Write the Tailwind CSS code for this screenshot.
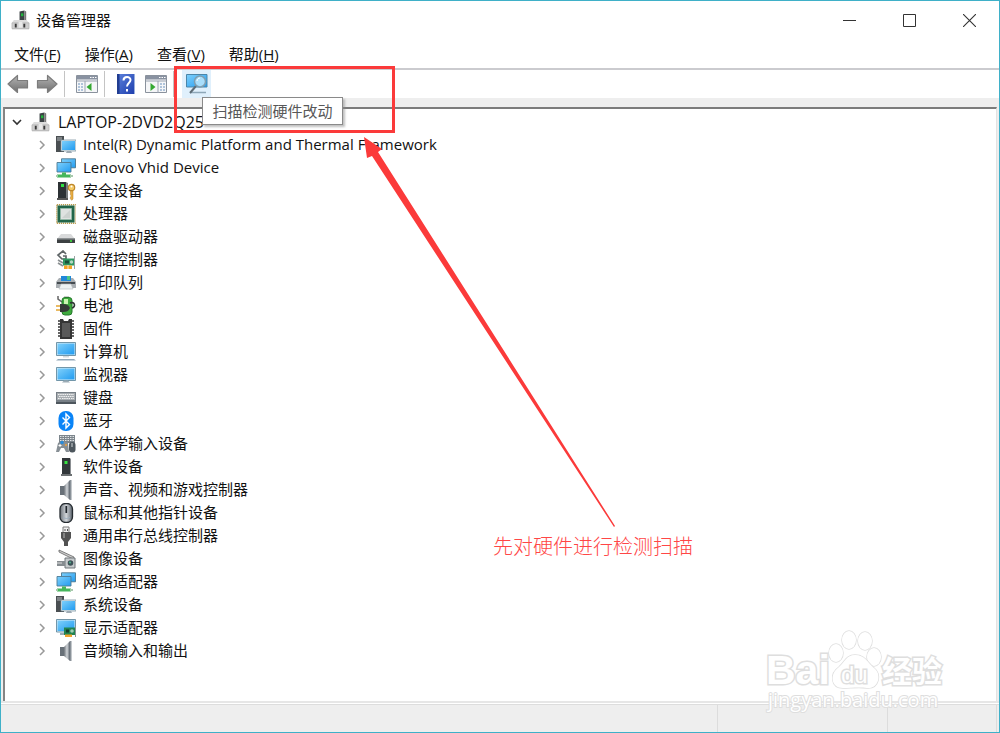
<!DOCTYPE html>
<html lang="zh-CN">
<head>
    <meta charset="UTF-8">
    <meta name="viewport" content="width=device-width, initial-scale=1.0">
    <title>设备管理器</title>
    <script src="https://cdn.jsdelivr.net/npm/@tailwindcss/browser@4"></script>
</head>
<body class="bg-white text-[#111] text-[15px] font-['Open_Sans','Noto_Sans_CJK_SC',sans-serif]">

    <!-- icon sprite -->
    <svg class="absolute w-0 h-0" aria-hidden="true">
        <defs>
            <linearGradient id="blue" x1="0" y1="0" x2="1" y2="1"><stop offset="0" stop-color="#7fd0fb"/><stop offset="1" stop-color="#219bf0"/></linearGradient>
            <linearGradient id="grey" x1="0" y1="0" x2="0" y2="1"><stop offset="0" stop-color="#b4b4b4"/><stop offset="1" stop-color="#6f6f6f"/></linearGradient>
            <linearGradient id="steel" x1="0" y1="0" x2="1" y2="0"><stop offset="0" stop-color="#6d737a"/><stop offset=".5" stop-color="#d2d6da"/><stop offset="1" stop-color="#59616a"/></linearGradient>
            <linearGradient id="help" x1="0" y1="0" x2="1" y2="1"><stop offset="0" stop-color="#5d82dc"/><stop offset="1" stop-color="#1f3fae"/></linearGradient>
        </defs>
        <symbol id="i-root" viewBox="0 0 20 20">
            <path d="M9 1l5-1v12H9z" fill="#3c4345"/><path d="M14 0l2 1v10l-2 1z" fill="#777"/><path d="M10.500 3h2.500v3h-2.500z" fill="#20b63c"/>
            <path d="M3 10h13l3 3v7H1v-7z" fill="#dcdcdc"/><path d="M1 13h18v6H1z" fill="#cfcfcf" stroke="#a8a8a8" stroke-width=".6"/>
            <path d="M4 14h2v4H4zM13 14h2v4h-2z" fill="#3a3a3a"/><path d="M8 12h4v6H8z" fill="#e9e9e9"/>
        </symbol>
        <symbol id="i-system" viewBox="0 0 20 20">
            <path d="M0 1h8v16H0z" fill="#4a4f52"/><path d="M1 3h5M1 5h5" stroke="#b3b8ba"/><path d="M5 7h2v2H5z" fill="#37e05b"/>
            <path d="M5 5h15v11H5z" fill="#e9f3f8" stroke="#6d8896" stroke-width=".7"/><path d="M6 6h13v9H6z" fill="url(#blue)"/>
            <path d="M11 16h4l1 2h-6z" fill="#9eabb4"/>
        </symbol>
        <symbol id="i-network" viewBox="0 0 20 20">
            <path d="M5.500 .8h14v9h-14z" fill="url(#blue)" stroke="#4b7890" stroke-width=".9"/>
            <path d="M1 4.500h14v9.500H1z" fill="url(#blue)" stroke="#4f7b93" stroke-width=".9"/>
            <path d="M6 14.500h4v2h5v3H1v-3h5z" fill="#45b65c"/><path d="M0 17h2v2H0zM14 17h3v2h-3z" fill="#a8c9ad"/>
        </symbol>
        <symbol id="i-security" viewBox="0 0 20 20">
            <path d="M2 1h8v16H2z" fill="#2d3235"/><path d="M10 1l2 1v15h-2z" fill="#777b7d"/><path d="M1 17h11v2H1z" fill="#555"/><path d="M5 3h3v3H5z" fill="#2ee042"/>
            <circle cx="15.500" cy="6.500" r="3.200" fill="#f4c965" stroke="#bd862a" stroke-width="1.200"/><path d="M14.500 10h2.500v8l-1.300 1.300-1.300-1.500V16l1-1-1-1.200z" fill="#e9ad41" stroke="#b07c23" stroke-width=".5"/><circle cx="15.500" cy="5.500" r="1" fill="#fff"/>
        </symbol>
        <symbol id="i-cpu" viewBox="0 0 20 20">
            <path d="M.8.8h18.400v18.400H.8z" fill="none" stroke="#b99b4e" stroke-width="1.400" stroke-dasharray="1.200 .8"/><path d="M1.500 1.500h17v17h-17z" fill="#22664a"/>
            <path d="M4.500 4.500h11v11h-11z" fill="#dfe2e0" stroke="#94b7a6"/><path d="M6 14L14 6v8z" fill="#cdd2cf"/>
        </symbol>
        <symbol id="i-disk" viewBox="0 0 20 20">
            <path d="M5 7h10l4 5H1z" fill="#d9dadb"/><path d="M1 11.500h18V16H1z" fill="#3c4042"/><path d="M1 11.500h18v1H1z" fill="#8f9496"/><circle cx="15" cy="14" r="1.100" fill="#3fe33e"/>
        </symbol>
        <symbol id="i-storage" viewBox="0 0 20 20">
            <path d="M10 4L7 1 2 5l4 4h4V6H7" fill="none" stroke="#5f6567" stroke-width="1.700"/><path d="M2 10l5 3M2 13l5 3" stroke="#8a8f91" stroke-width="1.700"/>
            <path d="M7 8.500h11v7H7z" fill="#2e9861"/><path d="M9 10.500h4v3H9z" fill="#194f38"/><circle cx="15.500" cy="12" r="1.700" fill="#b6d8c4"/><path d="M18.500 6v13" stroke="#9ba3a5"/><path d="M8 15.500h8V19H8z" fill="#f5a425"/><path d="M12 15v4" stroke="#fff" stroke-width=".7"/>
        </symbol>
        <symbol id="i-printer" viewBox="0 0 20 20">
            <path d="M5 3h10v5H5z" fill="#2088d9"/><path d="M11 3h3v4h-3z" fill="#4cc784"/><path d="M3 5h2v3h10V5h2l3 4v6H0V9z" fill="#a9aeb2"/>
            <path d="M1 9h18v2H1z" fill="#454b50"/><path d="M5 11h10l2 5H3z" fill="#edf1f2" stroke="#b3b9bc" stroke-width=".6"/>
        </symbol>
        <symbol id="i-battery" viewBox="0 0 20 20">
            <path d="M2 0v3l4 3" fill="none" stroke="#666" stroke-width="1.500"/><path d="M8 0h5v2H8z" fill="#ccc"/><rect x="6" y="1.500" width="10" height="17.500" rx="3" fill="#3eaa3e" stroke="#267a2c"/><path d="M8 3h4v5H8z" fill="#c9f5b0"/>
            <path d="M14 7c5-2 6 4 2 5" fill="none" stroke="#303534" stroke-width="1.600"/><path d="M4 8h3c4 0 6 2 7 4-1 3-4 4-7 4H4z" fill="#343936"/><path d="M0 10h4M0 14h4" stroke="#e2a432" stroke-width="1.500"/>
        </symbol>
        <symbol id="i-firmware" viewBox="0 0 20 20">
            <path d="M3.500 1v18M16.500 1v18" stroke="#666" stroke-width="3" stroke-dasharray="2 1"/><path d="M4 0h3l1 2h4l1-2h3v20H4z" fill="#353535"/><path d="M6 4h8v14H6z" fill="#595959"/>
        </symbol>
        <symbol id="i-computer" viewBox="0 0 20 20">
            <path d="M.5.500h19v13H.5z" fill="#d7ebf5" stroke="#537d94" stroke-width=".8"/><path d="M1.500 1.500h17v11h-17z" fill="url(#blue)"/><path d="M7 14h6v1.500H7z" fill="#d2d9de"/><path d="M2 17h16l2 1.500H0z" fill="#91a8b9"/>
        </symbol>
        <symbol id="i-monitor" viewBox="0 0 20 20">
            <path d="M.5 2.500h19v13H.5z" fill="#d7ebf5" stroke="#537d94" stroke-width=".8"/><path d="M1.500 3.500h17v11h-17z" fill="url(#blue)"/><path d="M8 15.500h4l2 2H6z" fill="#9babb5"/>
        </symbol>
        <symbol id="i-keyboard" viewBox="0 0 20 20">
            <path d="M0 4h20v12H0z" fill="#777f86"/><path d="M1 5h18v7H1z" fill="#a8adb1"/><path d="M2 6.500h16M3 8.500h15M2 10.500h3m1 0h8m1 0h3" stroke="#f2f2f2" stroke-dasharray="1.500 .7"/><path d="M0 14h20v2H0z" fill="#4e565d"/>
        </symbol>
        <symbol id="i-bluetooth" viewBox="0 0 20 20">
            <rect x="2.500" y="0" width="15" height="20" rx="7" fill="#0a84f7"/><path d="M6.500 6.500l7 7L10 17V3l3.500 3.500-7 7" fill="none" stroke="#fff" stroke-width="1.400"/>
        </symbol>
        <symbol id="i-hid" viewBox="0 0 20 20">
            <path d="M3 1h16v8H3z" fill="#7c858c"/><path d="M4 2.500h14M4 4.500h14M4 6.500h14" stroke="#e0e3e5" stroke-dasharray="1.500 1"/>
            <path d="M2 9c3-2 7-2 10 0l1 9h-3l-2-4H5l-2 4H0z" fill="#878f95"/><path d="M4 10v3M2.500 11.500h3" stroke="#fff"/><circle cx="6" cy="8.500" r="1.800" fill="#278bdb"/><circle cx="10" cy="11" r="1" fill="#f29f34"/><rect x="13" y="8" width="6.500" height="10.500" rx="3" fill="#4d565d"/><path d="M16 9v4" stroke="#cfd4d7"/>
        </symbol>
        <symbol id="i-software" viewBox="0 0 20 20">
            <path d="M6 1h8v16H6z" fill="#32373a"/><path d="M14 1l1 1v15h-1z" fill="#8b8f92"/><path d="M5 17h11v2H5z" fill="#6c7072"/><path d="M8.500 4h3v3h-3z" fill="#35e33f"/>
        </symbol>
        <symbol id="i-sound" viewBox="0 0 20 20">
            <path d="M4 6h4v9H4z" fill="#687078"/><path d="M8 6l6-6v20l-6-5z" fill="url(#steel)"/><path d="M14 0h1.500v20H14z" fill="#8a9299"/>
        </symbol>
        <symbol id="i-mouse" viewBox="0 0 20 20">
            <rect x="4" y=".5" width="12.500" height="19" rx="5.500" fill="url(#steel)" stroke="#252b30" stroke-width="1.300"/><path d="M10.300 3v7" stroke="#20262c" stroke-width="1.700"/><path d="M7 14c2 2 5 2 7 0" stroke="#9baebf" fill="none"/>
        </symbol>
        <symbol id="i-usb" viewBox="0 0 20 20">
            <path d="M7 1h6v6H7z" fill="#f0f0f0" stroke="#7b7b7b"/><path d="M9 3v2M11.500 3v2" stroke="#555"/><path d="M5 6h10v6l-3 4v4H8v-4l-3-4z" fill="#525252"/><path d="M7 7h2v5H7z" fill="#858585"/>
        </symbol>
        <symbol id="i-imaging" viewBox="0 0 20 20">
            <path d="M3 1l15 7-1 2L3 3z" fill="#ccc" stroke="#666" stroke-width=".8"/><path d="M9 9h10v10H9z" fill="#c6cacc" stroke="#71777a"/><path d="M1 12h8v5H1z" fill="#868c90"/><path d="M1 14h5" stroke="#ddd"/><circle cx="14.500" cy="14" r="2.800" fill="#3e5358"/><circle cx="14" cy="13.500" r="1" fill="#50b48f"/>
        </symbol>
        <symbol id="i-display" viewBox="0 0 20 20">
            <path d="M.5 1.500h19v12.500H.5z" fill="#d7ebf5" stroke="#537d94" stroke-width=".8"/><path d="M1.500 2.500h17V13h-17z" fill="url(#blue)"/><path d="M4 16h7" stroke="#9babb5" stroke-width="2"/><path d="M8 9.500h11V17H8z" fill="#218451"/><path d="M10 11.500h3v3h-3z" fill="#163f2c"/><circle cx="16" cy="13" r="1.800" fill="#9eceb5"/><path d="M9 16.500h7V19H9z" fill="#f2a32e"/><path d="M19.500 8v11" stroke="#8a9496"/>
        </symbol>
        <symbol id="i-arrow" viewBox="0 0 22 20">
            <path d="M1 10L10.500 1.500V6.500H20.500V14H10.500V18.500z" fill="url(#grey)" stroke="#7c7c7c" stroke-width="1.200" stroke-linejoin="round"/>
        </symbol>
        <symbol id="i-panel" viewBox="0 0 22 18">
            <path d="M.5.500h21v17H.5z" fill="#f5f6f8" stroke="#8a929d"/><path d="M1 1h20v3.500H1z" fill="#8992a1"/><path d="M14 2.500h1.500m1 0H18m1 0h1.500" stroke="#fff"/><path d="M1 6h20" stroke="#9aa3b0"/>
        </symbol>
    </svg>

    <div class="relative flex flex-col min-h-screen border border-[#3fb0c8] overflow-hidden">
        <header class="flex items-center h-[38px] pl-[10px]">
            <svg class="w-[19px] h-5"><use href="#i-root"/></svg>
            <h1 class="ml-[6px]">设备管理器</h1>
            <div class="ml-auto flex">
                <button aria-label="最小化" class="w-[60px] h-[38px] flex items-center justify-center"><svg class="w-[13px] h-[13px]" viewBox="0 0 13 13"><path d="M0 6.500h13" stroke="#333"/></svg></button>
                <button aria-label="最大化" class="w-[60px] h-[38px] flex items-center justify-center"><svg class="w-[13px] h-[13px]" viewBox="0 0 13 13"><path d="M.5.500h12v12H.5z" fill="none" stroke="#333"/></svg></button>
                <button aria-label="关闭" class="w-[60px] h-[38px] flex items-center justify-center"><svg class="w-[13px] h-[13px]" viewBox="0 0 13 13"><path d="M0 0l13 13M13 0L0 13" stroke="#333" stroke-width="1.100"/></svg></button>
            </div>
        </header>

        <nav class="flex items-center h-[29px] pl-[13px] gap-6 leading-[20px]">
            <button>文件(<u>F</u>)</button>
            <button>操作(<u>A</u>)</button>
            <button>查看(<u>V</u>)</button>
            <button>帮助(<u>H</u>)</button>
        </nav>

        <div class="flex items-center h-[30px] pl-[6px] border-t-2 border-[#cbcbcf]">
            <button aria-label="后退" class="mr-[7px]"><svg class="w-[22px] h-5"><use href="#i-arrow"/></svg></button>
            <button aria-label="前进"><svg class="w-[22px] h-5 -scale-x-100"><use href="#i-arrow"/></svg></button>
            <span class="w-px h-[26px] ml-[6px] mr-[11px] bg-[#c4c4c4]"></span>
            <button aria-label="显示/隐藏控制台树">
                <svg class="w-[22px] h-[18px]" viewBox="0 0 22 18"><use href="#i-panel"/><path d="M2 9h5M2 12h5M2 15h5" stroke="#6a92bd" stroke-dasharray="2 1"/><path d="M9 6v12" stroke="#9aa3b0"/><path d="M15.500 8v8L10.500 12z" fill="#35a832"/></svg>
            </button>
            <span class="w-px h-[26px] ml-[6px] mr-3 bg-[#c4c4c4]"></span>
            <button aria-label="帮助">
                <svg class="w-[18px] h-5" viewBox="0 0 18 20"><path d="M0 0h17v20H0z" fill="url(#help)"/><path d="M0 0h2.500v20H0z" fill="#213d91"/><path d="M17 0h1v20h-1z" fill="#9ab0dd"/><path d="M6.500 6.500c0-4.500 7-4.500 7-.5 0 3-3.500 3-3.500 6.500M10 15v2.500" fill="none" stroke="#fff" stroke-width="2"/></svg>
            </button>
            <button aria-label="显示/隐藏操作窗格" class="ml-[10px]">
                <svg class="w-[22px] h-[18px]" viewBox="0 0 22 18"><use href="#i-panel"/><path d="M15 9h5M15 12h5M15 15h5" stroke="#6a92bd" stroke-dasharray="2 1"/><path d="M13 6v12" stroke="#9aa3b0"/><path d="M5.500 8v8l5-4z" fill="#35a832"/></svg>
            </button>
            <span class="w-px h-[26px] ml-[6px] mr-2 bg-[#c4c4c4]"></span>
            <div class="relative">
                <button aria-label="扫描检测硬件改动" class="flex items-center justify-center w-[29px] h-7 bg-[#e0f0fc]">
                    <svg class="w-[22px] h-5" viewBox="0 0 22 20"><path d="M.5.500h20.500v12.500H.5z" fill="url(#blue)" stroke="#4c86a9"/><path d="M4 18.500h16" stroke="#8da7b8" stroke-width="1.500"/><path d="M10 12l-6 7" stroke="#5e6d77" stroke-width="2"/><circle cx="14" cy="7.500" r="5.500" fill="#a9defb" stroke="#7f9eb0" stroke-width="1.500"/><path d="M11 7c0-2 2-3 3-3" stroke="#fff" fill="none"/></svg>
                </button>
                <div role="tooltip" class="absolute left-5 top-[27px] z-10 flex items-center justify-center w-[141px] h-7 bg-white border border-[#8a8a8a] shadow-[2px_2px_2px_#8888] text-[#585858] whitespace-nowrap">扫描检测硬件改动</div>
                <!-- highlight frame -->
                <div class="absolute -left-2 -top-1 z-20 w-[221px] h-[67px] border-3 border-[#fb3a3a]"></div>
            </div>
        </div>

        <main class="flex flex-col grow bg-[#eee] pt-[9px] px-[2px]">
            <div class="grow bg-white border-t-2 border-l-2 border-t-[#7b7b7b] border-l-[#858585] border-r border-r-[#e3e3e3] pt-px pb-9">
                <div class="flex items-center h-[23px] pl-[7px]">
                    <button aria-label="折叠"><svg class="w-[10px] h-[10px]" viewBox="0 0 10 10"><path d="M1 3l4 4 4-4" fill="none" stroke="#333" stroke-width="1.600"/></svg></button>
                    <svg class="w-[19px] h-5 ml-[9px] mr-2"><use href="#i-root"/></svg>
                    <span class="text-base">LAPTOP-2DVD2Q25</span>
                </div>
                <ul id="deviceList"></ul>
            </div>
        </main>

        <footer class="flex h-7 bg-[#eee] border-t border-[#ddd] shadow-[0_-1px_0_#fff,0_-3px_0_#e6e6e6]">
            <span class="grow"></span>
            <span class="w-[170px] border-l border-[#dcdcdc]"></span>
            <span class="w-[110px] border-x border-[#dcdcdc] mr-[2px]"></span>
        </footer>

        <!-- pointer from the note to the scan button -->
        <svg class="absolute left-[363px] top-[136px] w-[254px] h-[392px]" viewBox="0 0 254 392"><path d="M0 0L18 12 14 15 251 389 250 390 8 19 3 21z" fill="#fb3a3a"/></svg>
        <p class="absolute left-[492px] top-[531px] text-xl leading-[30px] font-light text-[#ff4646] whitespace-nowrap">先对硬件进行检测扫描</p>

        <svg class="absolute right-[50px] bottom-[16px] w-[184px] h-[94px]" viewBox="0 0 184 94" fill="#fff" stroke="#dedede" stroke-width="1.500" paint-order="stroke">
            <ellipse cx="71" cy="31" rx="7" ry="9"/><ellipse cx="84" cy="18" rx="7" ry="9"/><ellipse cx="100" cy="19" rx="7" ry="9"/><ellipse cx="109" cy="35" rx="7" ry="9"/>
            <path d="M90 33c-9 0-10 7-16 12-10 7-8 21 4 21 7 0 17-1 24 0 12 1 15-14 7-20-7-6-9-13-19-13z"/>
            <g stroke-width="3" font-weight="700" font-family="'Liberation Sans','Noto Sans CJK SC',sans-serif">
                <text x="1" y="62" font-size="41">Bai</text>
                <text x="76" y="61" font-size="24" font-weight="400">du</text>
                <text x="117" y="60" font-size="30">经验</text>
            </g>
            <text x="3" y="85" font-size="20" stroke-width="2">jingyan.baidu.com</text>
        </svg>
    </div>

    <script>
        const devices = [
            ['system', 'Intel(R) Dynamic Platform and Thermal Framework'],
            ['network', 'Lenovo Vhid Device'],
            ['security', '安全设备'],
            ['cpu', '处理器'],
            ['disk', '磁盘驱动器'],
            ['storage', '存储控制器'],
            ['printer', '打印队列'],
            ['battery', '电池'],
            ['firmware', '固件'],
            ['computer', '计算机'],
            ['monitor', '监视器'],
            ['keyboard', '键盘'],
            ['bluetooth', '蓝牙'],
            ['hid', '人体学输入设备'],
            ['software', '软件设备'],
            ['sound', '声音、视频和游戏控制器'],
            ['mouse', '鼠标和其他指针设备'],
            ['usb', '通用串行总线控制器'],
            ['imaging', '图像设备'],
            ['network', '网络适配器'],
            ['system', '系统设备'],
            ['display', '显示适配器'],
            ['sound', '音频输入和输出']
        ];

        document.getElementById('deviceList').innerHTML = devices.map(([icon, name]) => `
            <li class="flex items-center h-[23px] pl-[32px] whitespace-nowrap">
                <button aria-label="展开 ${name}"><svg class="w-[10px] h-[10px]" viewBox="0 0 10 10"><path d="M3 1l4 4-4 4" fill="none" stroke="#999" stroke-width="1.500"/></svg></button>
                <svg class="w-5 h-5 ml-[9px] mr-[7px]"><use href="#i-${icon}"/></svg>
                <span>${name}</span>
            </li>`).join('');
    </script>
</body>
</html>
